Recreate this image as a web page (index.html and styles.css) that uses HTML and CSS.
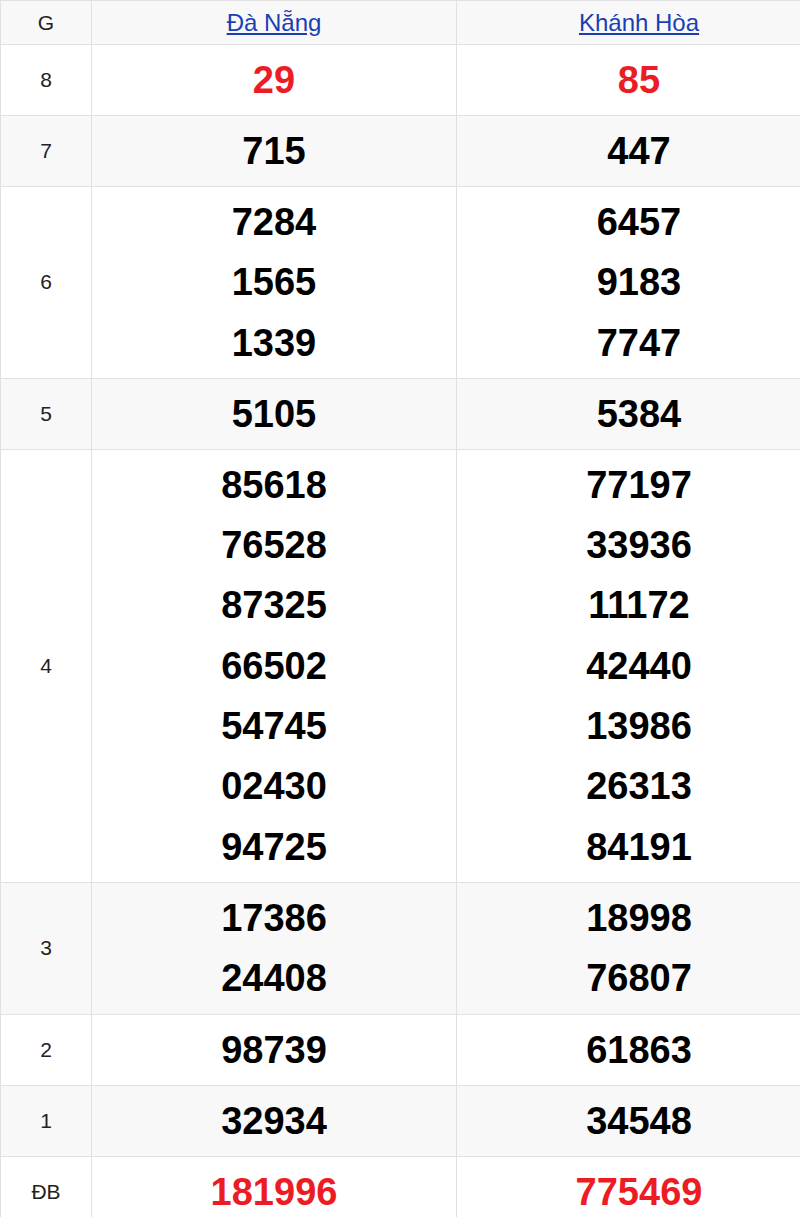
FILE: index.html
```html
<!DOCTYPE html>
<html lang="vi">
<head>
<meta charset="utf-8">
<title>Kết quả xổ số</title>
<link rel="stylesheet" href="styles.css">
</head>
<body>
<table class="kq">
  <colgroup><col class="c-g"><col class="c-p"><col class="c-p"></colgroup>
  <thead>
    <tr class="head">
      <th class="lbl">G</th>
      <th><a href="#">Đà Nẵng</a></th>
      <th><a href="#">Khánh Hòa</a></th>
    </tr>
  </thead>
  <tbody>
    <tr><td class="lbl">8</td><td class="num red">29</td><td class="num red">85</td></tr>
    <tr class="alt"><td class="lbl">7</td><td class="num">715</td><td class="num">447</td></tr>
    <tr><td class="lbl">6</td>
      <td class="num"><div>7284</div><div>1565</div><div>1339</div></td>
      <td class="num"><div>6457</div><div>9183</div><div>7747</div></td></tr>
    <tr class="alt"><td class="lbl">5</td><td class="num">5105</td><td class="num">5384</td></tr>
    <tr><td class="lbl">4</td>
      <td class="num"><div>85618</div><div>76528</div><div>87325</div><div>66502</div><div>54745</div><div>02430</div><div>94725</div></td>
      <td class="num"><div>77197</div><div>33936</div><div>11172</div><div>42440</div><div>13986</div><div>26313</div><div>84191</div></td></tr>
    <tr class="alt"><td class="lbl">3</td>
      <td class="num"><div>17386</div><div>24408</div></td>
      <td class="num"><div>18998</div><div>76807</div></td></tr>
    <tr><td class="lbl">2</td><td class="num">98739</td><td class="num">61863</td></tr>
    <tr class="alt"><td class="lbl">1</td><td class="num">32934</td><td class="num">34548</td></tr>
    <tr><td class="lbl">ĐB</td><td class="num red">181996</td><td class="num red">775469</td></tr>
  </tbody>
</table>
</body>
</html>
```
FILE: styles.css
```css
html, body {
  margin: 0;
  padding: 0;
  background: #fff;
  overflow: hidden;
}
body {
  font-family: "Liberation Sans", Arial, sans-serif;
  color: #222;
}
.kq {
  border-collapse: collapse;
  width: 821px;
  table-layout: fixed;
}
.c-g { width: 91px; }
.c-p { width: 365px; }
.kq th, .kq td {
  border: 1px solid #e1e1e1;
  text-align: center;
  vertical-align: middle;
  padding: 5px 0;
}
.head th {
  background: #f8f8f8;
  height: 43px;
  font-weight: normal;
  font-size: 24px;
  padding: 0;
}
.head th.lbl { font-size: 21px; color: #222; }
.head a {
  color: #1a3fb5;
  text-decoration: underline;
}
.lbl {
  font-size: 21px;
  color: #222;
}
.alt td { background: #f8f8f8; }
.num {
  font-size: 38px;
  font-weight: bold;
  color: #000;
  line-height: 60px;
}
.num div { line-height: 60.3px; }
.num.red { color: #ed1c24; }
```
